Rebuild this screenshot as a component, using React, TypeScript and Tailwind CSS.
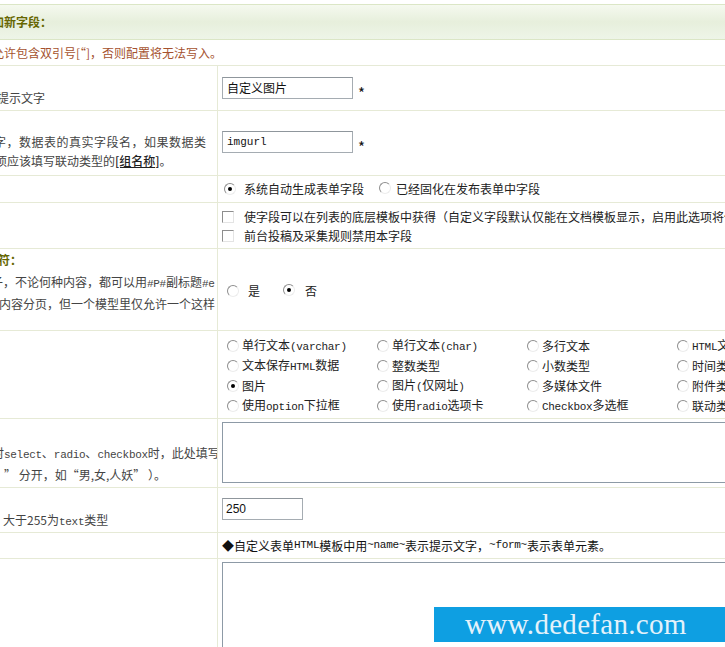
import React from "react";

const Radio = ({ checked = false }: { checked?: boolean }) => (
  <span className="relative inline-block w-[12px] h-[12px] shrink-0 rounded-full border border-t-[#8e8e8e] border-l-[#8e8e8e] border-r-[#ececec] border-b-[#ececec] bg-white">
    {checked && (
      <span className="absolute left-[3px] top-[3px] w-[4px] h-[4px] rounded-full bg-black" />
    )}
  </span>
);

const Check = () => (
  <span className="inline-block w-[12px] h-[12px] shrink-0 border border-t-[#8e8e8e] border-l-[#8e8e8e] border-r-[#e4e4e4] border-b-[#e4e4e4] bg-white" />
);

const M = ({ children }: { children: React.ReactNode }) => (
  <span className="font-['Liberation_Mono',monospace] text-[11px] tracking-[-0.3px]">{children}</span>
);

const Row = ({
  h,
  left,
  right,
}: {
  h: string;
  left: React.ReactNode;
  right: React.ReactNode;
}) => (
  <div className={`flex border-b border-[#e6ead6] ${h}`}>
    <div className="w-[218px] shrink-0 overflow-hidden border-r border-[#e6ead6] text-[#444]">{left}</div>
    <div className="flex-1 pl-[4px] overflow-hidden">{right}</div>
  </div>
);

const types: [string, React.ReactNode, boolean][] = [
  ["a", <>单行文本<M>(varchar)</M></>, false],
  ["b", <>单行文本<M>(char)</M></>, false],
  ["c", <>多行文本</>, false],
  ["d", <><M>HTML</M>文本</>, false],
  ["e", <>文本保存<M>HTML</M>数据</>, false],
  ["f", <>整数类型</>, false],
  ["g", <>小数类型</>, false],
  ["h", <>时间类型</>, false],
  ["i", <>图片</>, true],
  ["j", <>图片<M>(</M>仅网址<M>)</M></>, false],
  ["k", <>多媒体文件</>, false],
  ["l", <>附件类型</>, false],
  ["m", <>使用<M>option</M>下拉框</>, false],
  ["n", <>使用<M>radio</M>选项卡</>, false],
  ["o", <><M>Checkbox</M>多选框</>, false],
  ["p", <>联动类型</>, false],
];

export default function App() {
  return (
    <div className="relative w-[725px] h-[647px] overflow-hidden bg-white font-['Noto_Sans_CJK_SC',sans-serif] text-[12px] text-[#222]">
      <div className="h-[4px]" />
      {/* header */}
      <div className="flex items-center h-[36px] border-y border-[#dbe6c6] bg-linear-to-b from-[#f5f9ef] via-[#e7efdc] to-[#eef5e8] whitespace-nowrap">
        <span className="-ml-[8px] font-bold text-[#666600]">加新字段：</span>
      </div>
      {/* notice */}
      <div className="flex items-center h-[26px] border-b border-[#e6ead6] whitespace-nowrap">
        <span className="-ml-[8px] text-[#a5522e]">允许包含双引号[“]，否则配置将无法写入。</span>
      </div>

      <Row
        h="h-[45px]"
        left={<div className="pt-[22px] leading-[19px] -ml-[3px] whitespace-nowrap">提示文字</div>}
        right={
          <div className="flex items-start pt-[11px]">
            <div className="w-[131px] h-[22px] border border-[#a5acb2] border-t-[#8f969c] flex items-center pl-[4px] text-[#111]">自定义图片</div>
            <span className="ml-[5px] mt-[9px] leading-[14px] text-[15px] text-[#111]">*</span>
          </div>
        }
      />

      <Row
        h="h-[65px]"
        left={
          <div className="pt-[21px] leading-[19px] whitespace-nowrap">
            <div className="-ml-[6px] tracking-[0.5px]">字，数据表的真实字段名，如果数据类</div>
            <div className="-ml-[5px]">
              项应该填写联动类型的<span className="underline text-[#222] font-medium">[组名称]</span>。
            </div>
          </div>
        }
        right={
          <div className="flex items-start pt-[20px]">
            <div className="w-[131px] h-[22px] border border-[#a5acb2] border-t-[#8f969c] flex items-center pl-[4px] text-[#111]">
              <span className="font-['Liberation_Mono',monospace] text-[11px]">imgurl</span>
            </div>
            <span className="ml-[5px] mt-[9px] leading-[14px] text-[15px] text-[#111]">*</span>
          </div>
        }
      />

      <Row
        h="h-[27px]"
        left={<div />}
        right={
          <div className="flex items-center h-full pl-[2px] whitespace-nowrap">
            <Radio checked />
            <span className="ml-[8px]">系统自动生成表单字段</span>
            <span className="ml-[15px]"><Radio /></span>
            <span className="ml-[5px]">已经固化在发布表单中字段</span>
          </div>
        }
      />

      <Row
        h="h-[46px]"
        left={<div />}
        right={
          <div className="pt-[4px] leading-[19px] whitespace-nowrap">
            <div className="flex items-center">
              <Check />
              <span className="ml-[10px]">使字段可以在列表的底层模板中获得（自定义字段默认仅能在文档模板显示，启用此选项将使其可用）</span>
            </div>
            <div className="flex items-center">
              <Check />
              <span className="ml-[10px]">前台投稿及采集规则禁用本字段</span>
            </div>
          </div>
        }
      />

      <Row
        h="h-[82px]"
        left={
          <div className="pt-[1px] leading-[19px] whitespace-nowrap">
            <div className="-ml-[2px] font-bold text-[#666600] mb-[3px]">符：</div>
            <div className="-ml-[9px]">子，不论何种内容，都可以用<M>#P#</M>副标题<M>#e</M></div>
            <div className="-ml-[1px]">内容分页，但一个模型里仅允许一个这样</div>
          </div>
        }
        right={
          <div className="flex items-center h-full pt-[3px] pl-[5px] whitespace-nowrap">
            <Radio />
            <span className="ml-[9px]">是</span>
            <span className="ml-[23px]"><Radio checked /></span>
            <span className="ml-[10px]">否</span>
          </div>
        }
      />

      <Row
        h="h-[88px]"
        left={<div />}
        right={
          <div className="grid grid-cols-[150px_150px_150px_150px] pt-[5px] pl-[5px] leading-[20px] whitespace-nowrap">
            {types.map(([k, label, c]) => (
              <div key={k} className="flex items-center h-[20px]">
                <Radio checked={c} />
                <span className="ml-[3px]">{label}</span>
              </div>
            ))}
          </div>
        }
      />

      <Row
        h="h-[69px]"
        left={
          <div className="pt-[24px] leading-[20px] whitespace-nowrap">
            <div className="-ml-[8px]">时<M>select</M>、<M>radio</M>、<M>checkbox</M>时，此处填写</div>
            <div className="ml-[4px]">” 分开，如“男,女,人妖” ）。</div>
          </div>
        }
        right={
          <div className="pt-[3px]">
            <div className="w-[620px] h-[61px] border border-[#8d9aa6] bg-white" />
          </div>
        }
      />

      <Row
        h="h-[45px]"
        left={
          <div className="pt-[22px] leading-[19px] ml-[3px] whitespace-nowrap">
            大于255为<M>text</M>类型
          </div>
        }
        right={
          <div className="pt-[10px]">
            <div className="w-[81px] h-[22px] border border-[#a5acb2] border-t-[#8f969c] flex items-center pl-[3px] font-['Liberation_Sans',sans-serif] text-[12px] text-[#111]">250</div>
          </div>
        }
      />

      <Row
        h="h-[26px]"
        left={<div />}
        right={
          <div className="flex items-center h-full whitespace-nowrap text-[#111]">
            ◆自定义表单<M>HTML</M>模板中用<M>~name~</M>表示提示文字，<M>~form~</M>表示表单元素。
          </div>
        }
      />

      <Row
        h="h-[120px]"
        left={<div />}
        right={
          <div className="pt-[3px]">
            <div className="w-[620px] h-[120px] border border-[#8d9aa6] bg-white" />
          </div>
        }
      />

      {/* watermark overlay */}
      <div className="absolute left-[434px] top-[607px] w-[300px] h-[35px] bg-[#0e9fe2] flex items-center pl-[31px]">
        <span className="font-['Liberation_Serif',serif] text-[29px] leading-none tracking-[0.3px] text-[#e4f2fb]">www.dedefan.com</span>
      </div>
    </div>
  );
}
